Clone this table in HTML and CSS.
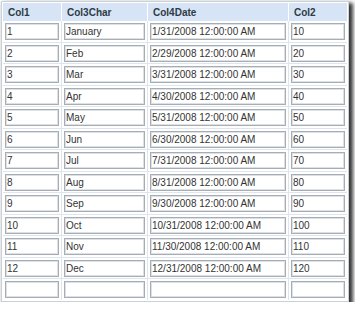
FILE: index.html
```html
<!DOCTYPE html>
<html>
<head>
<meta charset="utf-8">
<link rel="stylesheet" href="styles.css">
</head>
<body>
<div class="frame">
<table class="grid">
<colgroup><col class="c1"><col class="c2"><col class="c3"><col class="c4"></colgroup>
<thead>
<tr><th>Col1</th><th>Col3Char</th><th>Col4Date</th><th>Col2</th></tr>
</thead>
<tbody>
<tr><td><input value="1"></td><td><input value="January"></td><td><input value="1/31/2008 12:00:00 AM"></td><td><input value="10"></td></tr>
<tr><td><input value="2"></td><td><input value="Feb"></td><td><input value="2/29/2008 12:00:00 AM"></td><td><input value="20"></td></tr>
<tr><td><input value="3"></td><td><input value="Mar"></td><td><input value="3/31/2008 12:00:00 AM"></td><td><input value="30"></td></tr>
<tr><td><input value="4"></td><td><input value="Apr"></td><td><input value="4/30/2008 12:00:00 AM"></td><td><input value="40"></td></tr>
<tr><td><input value="5"></td><td><input value="May"></td><td><input value="5/31/2008 12:00:00 AM"></td><td><input value="50"></td></tr>
<tr><td><input value="6"></td><td><input value="Jun"></td><td><input value="6/30/2008 12:00:00 AM"></td><td><input value="60"></td></tr>
<tr><td><input value="7"></td><td><input value="Jul"></td><td><input value="7/31/2008 12:00:00 AM"></td><td><input value="70"></td></tr>
<tr><td><input value="8"></td><td><input value="Aug"></td><td><input value="8/31/2008 12:00:00 AM"></td><td><input value="80"></td></tr>
<tr><td><input value="9"></td><td><input value="Sep"></td><td><input value="9/30/2008 12:00:00 AM"></td><td><input value="90"></td></tr>
<tr><td><input value="10"></td><td><input value="Oct"></td><td><input value="10/31/2008 12:00:00 AM"></td><td><input value="100"></td></tr>
<tr><td><input value="11"></td><td><input value="Nov"></td><td><input value="11/30/2008 12:00:00 AM"></td><td><input value="110"></td></tr>
<tr><td><input value="12"></td><td><input value="Dec"></td><td><input value="12/31/2008 12:00:00 AM"></td><td><input value="120"></td></tr>
<tr><td><input value=""></td><td><input value=""></td><td><input value=""></td><td><input value=""></td></tr>
</tbody>
</table>
</div>
</body>
</html>
```
FILE: styles.css
```css
html, body {
  margin: 0;
  padding: 0;
  background: #ffffff;
}

.frame {
  margin: 1px 0 0 1px;
  border: 1px solid #c9d0d8;
  padding: 1px;
  box-sizing: border-box;
  width: 348px;
  background: #ffffff;
  box-shadow: 3px 3px 4px 1px rgba(0, 0, 0, 0.8);
}

.grid {
  width: 344px;
  table-layout: fixed;
  border-collapse: separate;
  border-spacing: 0;
  font: 10px "Liberation Sans", Arial, sans-serif;
  color: #333333;
}

.c1 { width: 59px; }
.c2 { width: 86px; }
.c3 { width: 141px; }
.c4 { width: 58px; }

.grid th {
  height: 18px;
  padding: 0 0 0 5px;
  background: #d6e4f5;
  text-align: left;
  font-weight: bold;
  color: #2f3a46;
  border-right: 1px solid #ffffff;
  box-sizing: border-box;
}

.grid th:last-child {
  border-right: none;
}

.grid td {
  padding: 2px 2px 1.5px 2px;
  border-right: 1px solid #dfe5ec;
  border-bottom: 1px solid #dfe5ec;
}

.grid td:last-child {
  border-right: none;
}

.grid tr:last-child td {
  border-bottom: none;
}

.grid input {
  display: block;
  box-sizing: border-box;
  width: 100%;
  height: 17px;
  margin: 0;
  padding: 0 1px;
  border: 1px solid #a6adb4;
  box-shadow: inset 0 0 0 1px #dde1e5;
  background: #ffffff;
  font: 10px "Liberation Sans", Arial, sans-serif;
  color: #333333;
  outline: none;
}
```
